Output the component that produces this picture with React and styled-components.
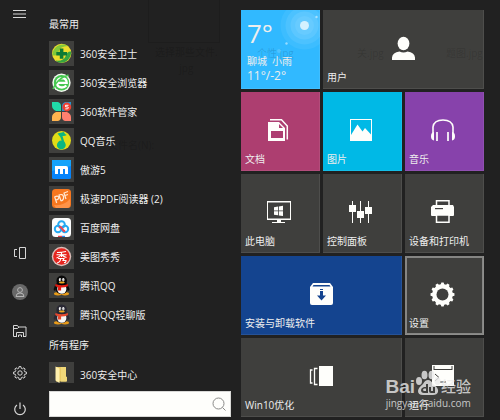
import React from 'react';
import styled, { createGlobalStyle } from 'styled-components';

const Global = createGlobalStyle`
  * { box-sizing: border-box; }
  body {
    margin: 0;
    background: #212121;
    color: #eeeeee;
    font: 10px/14px "Open Sans", "Noto Sans CJK SC", sans-serif;
  }
  button, input { font: inherit; color: inherit; }
`;

const Shell = styled.div`
  position: relative;
  display: flex;
  height: 100vh;
  overflow: hidden;
`;

const Rail = styled.nav`
  flex: none;
  display: flex;
  flex-direction: column;
  width: 40px;
`;

const RailButton = styled.button`
  display: grid;
  place-items: center;
  width: 40px;
  height: ${(p) => p.$height}px;
  margin-top: ${(p) => (p.$push ? 'auto' : '0')};
  padding: 0;
  border: 0;
  background: none;
  color: #d6d6d6;
`;

const RailGlyph = styled.svg`
  display: block;
  width: 16px;
  height: 16px;
  overflow: visible;
  fill: none;
  stroke: currentColor;
`;

const Programs = styled.section`
  flex: none;
  display: flex;
  flex-direction: column;
  width: 201px;
  padding: 17px 10px 3px 9px;
`;

const ProgramScroll = styled.div`
  flex: 1;
  min-height: 0;
  overflow: hidden;
`;

const Heading = styled.h2`
  margin: 0 0 10px;
  font-size: 10px;
  font-weight: 400;
  line-height: 14px;
`;

const AppList = styled.div`
  display: grid;
  gap: 4px;
  margin-bottom: 11px;
`;

const AppButton = styled.button`
  display: flex;
  align-items: center;
  gap: 6px;
  height: 25px;
  padding: 0;
  border: 0;
  background: none;
  text-align: left;
  white-space: nowrap;
`;

const AppIcon = styled.svg`
  flex: none;
  display: block;
  width: 25px;
  height: 25px;
  background: #3f3f3d;
`;

const Search = styled.form`
  display: flex;
  align-items: center;
  height: 26px;
  margin-top: 8px;
  padding: 0 4px 0 6px;
  background: #fefefb;
  border: 1px solid #d8d8d6;
`;

const SearchInput = styled.input`
  flex: 1;
  min-width: 0;
  border: 0;
  outline: 0;
  background: none;
  color: #222222;
`;

const SearchButton = styled.button`
  flex: none;
  padding: 0;
  border: 0;
  background: none;
  svg { display: block; width: 14px; height: 14px; }
`;

const Tiles = styled.main`
  flex: 1;
  display: grid;
  grid-template-columns: repeat(3, 1fr);
  grid-auto-rows: 79px;
  gap: 3px;
  align-content: start;
  padding: 10px 16px 3px 0;
`;

const Tile = styled.button`
  position: relative;
  display: grid;
  grid-column: span ${(p) => (p.$wide ? 2 : 1)};
  padding: 0;
  border: 0;
  overflow: hidden;
  text-align: left;
  background: ${(p) => p.$color || '#3f3f3d'};
  box-shadow: inset -1px -1px 0 rgba(255, 255, 255, 0.08)
    ${(p) => (p.$active ? ', inset 0 0 0 2px #858583' : '')};
`;

const TileIcon = styled.svg`
  grid-area: 1 / 1;
  place-self: center;
  display: block;
  width: 25px;
  height: 25px;
  margin-bottom: 2px;
  overflow: visible;
  fill: #fefefb;
`;

const TileLabel = styled.span`
  grid-area: 1 / 1;
  place-self: end start;
  padding: 0 0 5px 4px;
`;

const WeatherSky = styled.svg`
  grid-area: 1 / 1;
  justify-self: end;
  display: block;
  width: 79px;
  height: 79px;
`;

const WeatherText = styled.span`
  grid-area: 1 / 1;
  position: relative;
  display: flex;
  flex-direction: column;
  padding: 8px 0 0 6px;
`;

const Degrees = styled.span`
  font-size: 26px;
  line-height: 30px;
`;

const City = styled.span`
  padding-top: 6px;
  line-height: 14px;
`;

const Range = styled.span`
  font-size: 12px;
  line-height: 16px;
`;

const Ghost = styled.span`
  position: absolute;
  left: ${(p) => p.$x}px;
  top: ${(p) => p.$y}px;
  color: rgba(0, 0, 0, 0.14);
  line-height: 16px;
  text-align: center;
  white-space: pre-line;
  pointer-events: none;
`;

const GhostFrame = styled(Ghost)`
  width: ${(p) => p.$w}px;
  height: ${(p) => p.$h}px;
  border: 1px solid rgba(0, 0, 0, 0.1);
`;

const Watermark = styled.div`
  position: absolute;
  right: 29px;
  bottom: 11px;
  display: flex;
  flex-direction: column;
  align-items: center;
  color: rgba(235, 235, 235, 0.8);
  pointer-events: none;
`;

const WatermarkTop = styled.div`
  display: flex;
  align-items: flex-end;
  height: 30px;
  font: 700 19px/20px "Liberation Sans", "Noto Sans CJK SC", sans-serif;
  svg { display: block; width: 26px; height: 30px; }
`;

const WatermarkName = styled.span`
  font-size: 15px;
  line-height: 20px;
  font-weight: 500;
`;

const WatermarkUrl = styled.span`
  font: 10px/12px "Open Sans", sans-serif;
`;

function Penguin({ light }) {
  const dark = light ? '#292833' : '#080808';
  return (
    <>
      <ellipse cx="9" cy="20.7" rx="4" ry="1.7" fill="#e89b19" />
      <ellipse cx="16" cy="20.7" rx="4" ry="1.7" fill="#e89b19" />
      <path d="M6.5 11 4.7 16q0 3 2 1M18.5 11l2 5q0 3-2 1" fill={dark} />
      <ellipse cx="12.6" cy="14.5" rx="6.5" ry="6.7" fill={dark} />
      <ellipse cx="12.8" cy="16" rx="4.6" ry="4.8" fill="#f7f7f5" />
      <ellipse cx="12.7" cy="7.8" rx="5.3" ry="5.2" fill={dark} />
      <ellipse cx="11" cy="6.7" rx="1.2" ry="1.8" fill="#fff" />
      <ellipse cx="14.3" cy="6.7" rx="1.2" ry="1.8" fill="#fff" />
      <circle cx="11.3" cy="6.9" r=".5" fill="#111" />
      <circle cx="14" cy="6.9" r=".5" fill="#111" />
      <ellipse cx="12.8" cy="9.6" rx="3" ry="1" fill="#f0a81f" />
      <path d="M6.5 11q6.3 2.5 12.4 0v2.3q-3 1.3-6.4 1.3l-.4 0v3H8.8l.3-3.5q-2-.5-2.9-1.2Z" fill={light ? '#e5492e' : '#e31b12'} />
    </>
  );
}

const art = {
  guard: (
    <>
      <circle cx="12.7" cy="12.4" r="9.6" fill="#eedc2d" />
      <path d="M3.3 14C4 5 13 1 19 5q-8 0-9.6 6Q8.5 16 3.3 14Z" fill="#83c83a" />
      <path d="M22.2 10.5C22 20 13 25 6.5 19.5q8 1 10-4Q18 10 22.2 10.5Z" fill="#36a440" />
      <path d="M10.8 7.5h3.6V11H18v3.5h-3.6v3.3h-3.6v-3.3H7.3V11h3.5Z" fill="#0d7a35" />
    </>
  ),
  browser: (
    <>
      <circle cx="12.5" cy="12.8" r="9.2" fill="#f3f8f1" />
      <circle cx="12.5" cy="12.8" r="7.7" fill="#45c650" />
      <path d="M8 12.8h9.7q-.2-4.7-4.7-4.7-4.9.3-4.9 5 .3 4.3 4.8 4.4 2.7 0 4.4-2" fill="none" stroke="#fff" strokeWidth="2.3" />
      <path d="M4 19Q8 8.500 19.500 5" fill="none" stroke="#4acb52" strokeWidth="1.5" />
    </>
  ),
  manager: (
    <>
      <path d="M3 3h6q3 1 3 4v5H7q-4-2-4-5Z" fill="#20dba9" />
      <path d="M22 3h-6q-3 1-3 4v5h5q4-2 4-5Z" fill="#2794ce" />
      <path d="M3 22h6q3-1 3-4v-5H7q-4 2-4 5Z" fill="#ffb34e" />
      <path d="M22 22h-6q-3-1-3-4v-5h5q4 2 4 5Z" fill="#ff806f" />
      <circle cx="17.8" cy="8" r="4.4" fill="#ef3e2f" />
      <path d="M19.500 6.300h-3v1.500q3-.3 3 1.100 0 1.300-3.200 1" fill="none" stroke="#fff" />
    </>
  ),
  music: (
    <>
      <circle cx="12.5" cy="12.5" r="9.5" fill="#e1dc16" />
      <circle cx="12.3" cy="17" r="4.4" fill="#0bb681" />
      <path d="M8.500 5.500 14.800 4q1 2.600 3 3-2 1.300-4.300 1l2.900 9.500h-2L11.300 9Z" fill="#0bb681" />
    </>
  ),
  maxthon: (
    <>
      <rect x="3" y="3" width="19" height="19" rx="1.5" fill="#0784fb" />
      <path d="M3 3h19v6L3 14Z" fill="#14a3fb" />
      <path d="M6 17V9h11q2 0 2 2v6h-3v-5h-2v5h-3v-5H9v5Z" fill="#fff" />
    </>
  ),
  pdf: (
    <>
      <rect x="3" y="3" width="19" height="19" rx="3.5" fill="#f7771f" />
      <path d="M5 19q10 1 16-6v6q0 3-3 3H7Z" fill="#ff9348" />
      <g fill="none" stroke="#ffe9d5" strokeWidth="1.2">
        <path d="m7.700 17-2-6q3-2 4 .3.500 2-2.900 2.700M12 15l-2-6q3.500-1.500 4.500 1.500.600 3.500-2.500 4.500M17 13l-2-6 4-1.500M16 9.500l3-1" />
      </g>
    </>
  ),
  pan: (
    <>
      <rect x="3" y="3" width="19" height="19" rx="3.5" fill="#fcfdfd" />
      <g fill="none" strokeWidth="2">
        <circle cx="12.5" cy="9.5" r="3.3" stroke="#26aaf2" />
        <circle cx="9" cy="14" r="3.2" stroke="#26aaf2" />
        <circle cx="16" cy="14" r="3.2" stroke="#26aaf2" />
        <path d="M10 12.500q2-1 3 1t3 3" stroke="#ee4454" />
      </g>
      <path d="M9 20.800h4V22H9Z" fill="#e9404a" />
      <path d="M13 20.800h3V22h-3Z" fill="#268af1" />
    </>
  ),
  meitu: (
    <>
      <circle cx="12.5" cy="12.5" r="9.7" fill="#dcbdb8" />
      <circle cx="12.5" cy="12.5" r="8.3" fill="#e6251f" />
      <path d="M8 8.500q5 0 9-1M7.500 10.700h10M12.500 8v5M12 11q-2 2.500-4.500 3M13 11q2 2 4.500 2.500M9 14.500h6l-1 2h3q0 2.500-2 2M11.500 15q0 3-3.500 4" fill="none" stroke="#fff" strokeWidth="1.1" />
    </>
  ),
  qq: <Penguin />,
  qqlite: <Penguin light />,
  folder: (
    <>
      <path d="M7 5h10v14.500H7Z" fill="#e9ca65" />
      <path d="M12 5h5v9.500l1 .5v4.500h-6Z" fill="#f1d878" />
      <path d="m6.500 4.500 4 2V21l-4-2.500Z" fill="#fff0ad" />
    </>
  ),
};

const apps = [
  ['guard', '360安全卫士'],
  ['browser', '360安全浏览器'],
  ['manager', '360软件管家'],
  ['music', 'QQ音乐'],
  ['maxthon', '傲游5'],
  ['pdf', '极速PDF阅读器 (2)'],
  ['pan', '百度网盘'],
  ['meitu', '美图秀秀'],
  ['qq', '腾讯QQ'],
  ['qqlite', '腾讯QQ轻聊版'],
];

const gearPath = (cx, cy, outer, inner, teeth) => {
  const points = [];
  for (let i = 0; i < teeth; i += 1) {
    [[-0.32, inner], [-0.18, outer], [0.18, outer], [0.32, inner]].forEach(([o, r]) => {
      const a = ((i + o) / teeth) * Math.PI * 2 - Math.PI / 2;
      points.push(`${(cx + r * Math.cos(a)).toFixed(2)} ${(cy + r * Math.sin(a)).toFixed(2)}`);
    });
  }
  return `M${points.join('L')}Z`;
};

const tiles = [
  {
    label: '用户',
    wide: true,
    icon: (
      <>
        <ellipse cx="12.5" cy="7.5" rx="5.9" ry="6.7" />
        <path d="M1 24v-2.500q.500-5 7.500-6 4 2 8 0 7 1 7.500 6V24Z" />
      </>
    ),
  },
  {
    label: '文档',
    color: '#ad3e70',
    icon: (
      <>
        <path d="M2 1.700h11.500L19.300 8v13.500" fill="none" stroke="#fefefb" strokeWidth="1.5" />
        <path fillRule="evenodd" d="M0 4h11l6 6v13H0ZM3 13v7h12v-7ZM11 6v4h4Z" />
      </>
    ),
  },
  {
    label: '图片',
    color: '#00b9e6',
    icon: <path fillRule="evenodd" d="M0 1h22v22H0ZM1 2v15L7.500 6.500l5 7 2.500-3.500 6 6.500V2Z" />,
  },
  {
    label: '音乐',
    color: '#8742ab',
    icon: (
      <>
        <path d="M1 15V9Q2 2 11 2t10 7v6" fill="none" stroke="#fefefb" strokeWidth="1.6" />
        <path d="M2 14v8.500q-3-.500-3-4.300T2 14ZM20 14v8.500q3-.500 3-4.300T20 14Z" />
        <path d="M4 14h2v9H4ZM15 14h2v9h-2Z" opacity=".85" />
      </>
    ),
  },
  {
    label: '此电脑',
    icon: (
      <>
        <path fillRule="evenodd" d="M-1 1h24v19H13v2h4v1H4v-1h5v-2H-1ZM0 2.500v16h22v-16Z" />
        <path d="m6 7.200 4-.700v4H6Zm4.800-.800L15 5.700v4.800h-4.200ZM6 11.300h4v4l-4-.600Zm4.800 0H15v4.800l-4.200-.700Z" />
      </>
    ),
  },
  {
    label: '控制面板',
    icon: <path d="M2 1h1v4h3v7H3v11H2V12h-3V5h3ZM10 1h1v10h3v7h-3v5h-1v-5H7v-7h3ZM18 1h1v6h3v7h-3v9h-1v-9h-3V7h3Z" />,
  },
  {
    label: '设备和打印机',
    icon: (
      <>
        <path d="M1 5h20l1 2v8q0 1-1 1H0q-1 0-1-1V7Z" />
        <path d="M4.500 5V.700h12.500V5" fill="none" stroke="#fefefb" strokeWidth="1.5" />
        <path d="M4.500 15h12.500v7.300H4.500Z" fill="#3f3f3d" stroke="#fefefb" strokeWidth="1.5" />
        <path d="M3 8h8v1.200H3Z" fill="#3f3f3d" />
      </>
    ),
  },
  {
    label: '安装与卸载软件',
    wide: true,
    color: '#14448f',
    icon: (
      <>
        <path d="M4 1h17l3 4v16q0 2-2 2H3q-2 0-2-2V5Z" />
        <path d="M4.500 3h16l1 1.500H3.500ZM11 7h3v1h-3ZM11 9h3v4.500h3l-4.500 5-4.500-5h3Z" fill="#14448f" />
      </>
    ),
  },
  {
    label: '设置',
    active: true,
    icon: (
      <>
        <path d={gearPath(10.5, 12.5, 12, 10.3, 12)} />
        <circle cx="10.5" cy="12.5" r="6" fill="#3f3f3d" />
      </>
    ),
  },
  {
    label: 'Win10优化',
    wide: true,
    icon: (
      <>
        <path d="M10 2h14v20H10Z" />
        <path d="M8.500 4.500h-3v16h3M3.500 6h-2v13h2" fill="none" stroke="#fefefb" strokeWidth="1.3" />
      </>
    ),
  },
  {
    label: '运行',
    icon: (
      <>
        <path d="M0 1h22v21H0Z" />
        <path d="M1.500 2h1v3h17V2h1v4h-19Z" fill="#3f3f3d" />
        <path d="m3 10 4 3.500L3 17M8 18h6" fill="none" stroke="#3f3f3d" />
      </>
    ),
  },
];

function Program({ art: name, label }) {
  return (
    <AppButton type="button">
      <AppIcon viewBox="0 0 25 25" aria-hidden="true">{art[name]}</AppIcon>
      {label}
    </AppButton>
  );
}

export default function App() {
  return (
    <>
      <Global />
      <Shell>
        <Rail>
          <RailButton type="button" aria-label="菜单" $height={28}>
            <RailGlyph viewBox="0 0 16 16"><path d="M1 4.500h13M1 8h13M1 11.500h13" /></RailGlyph>
          </RailButton>
          <RailButton type="button" aria-label="布局" $height={34} $push>
            <RailGlyph viewBox="0 0 16 16">
              <path d="M7.500 2.500h6v11h-6ZM5 4.500H2.500v7H5" />
            </RailGlyph>
          </RailButton>
          <RailButton type="button" aria-label="账户" $height={44}>
            <RailGlyph viewBox="0 0 16 16">
              <circle cx="8" cy="8" r="8" fill="#686868" stroke="none" />
              <g stroke="#b5b5b5">
                <circle cx="8" cy="6" r="2.4" />
                <path d="M4 12.500q0-3.500 4-3.500t4 3.500Z" />
              </g>
            </RailGlyph>
          </RailButton>
          <RailButton type="button" aria-label="文件资源管理器" $height={34}>
            <RailGlyph viewBox="0 0 16 16">
              <path d="M4.500 13.500h-3v-11h4l1 1.500h7.500v9.500h-2.500M1.500 5.500h4L7 4M4.500 14V9.500h7V14M6.500 14v-2h3v2" />
            </RailGlyph>
          </RailButton>
          <RailButton type="button" aria-label="设置" $height={50}>
            <RailGlyph viewBox="0 0 16 16">
              <path d={gearPath(8, 8, 6.5, 4.9, 8)} />
              <circle cx="8" cy="8" r="2.2" />
            </RailGlyph>
          </RailButton>
          <RailButton type="button" aria-label="电源" $height={22}>
            <RailGlyph viewBox="0 0 16 16">
              <path d="M8 1.500V8M5 4a5.300 5.300 0 1 0 6 0" strokeWidth="1.2" />
            </RailGlyph>
          </RailButton>
        </Rail>

        <Programs>
          <ProgramScroll>
            <Heading>最常用</Heading>
            <AppList>
              {apps.map(([name, label]) => <Program key={name} art={name} label={label} />)}
            </AppList>
            <Heading>所有程序</Heading>
            <AppList>
              <Program art="folder" label="360安全中心" />
            </AppList>
          </ProgramScroll>
          <Search onSubmit={(e) => e.preventDefault()}>
            <SearchInput type="text" aria-label="搜索程序" />
            <SearchButton type="submit" aria-label="搜索">
              <svg viewBox="0 0 14 14" fill="none" stroke="#8a8a88">
                <circle cx="6.5" cy="6.5" r="5.5" />
                <path d="m10.500 10.500 3 3" />
              </svg>
            </SearchButton>
          </Search>
        </Programs>

        <Tiles>
          <Tile type="button" $color="#31b9ff">
            <WeatherSky viewBox="0 0 79 79" aria-hidden="true" fill="#fff">
              <circle cx="63.5" cy="15.5" r="24" opacity=".06" />
              <circle cx="63.5" cy="15.5" r="19" opacity=".08" />
              <circle cx="63.5" cy="15.5" r="14" opacity=".09" />
              <circle cx="63.5" cy="15.5" r="9.5" opacity=".07" />
              <circle cx="63.5" cy="15.5" r="4.5" opacity=".72" />
              <circle cx="75.5" cy="7" r="1.2" opacity=".5" />
              <circle cx="45.5" cy="33.5" r="1.2" opacity=".5" />
              <circle cx="38" cy="41" r="2" opacity=".15" />
            </WeatherSky>
            <WeatherText>
              <Degrees>7°</Degrees>
              <City>聊城&ensp;小雨</City>
              <Range>11°/-2°</Range>
            </WeatherText>
          </Tile>
          {tiles.map((t) => (
            <Tile key={t.label} type="button" $wide={t.wide} $color={t.color} $active={t.active}>
              <TileIcon viewBox="0 0 25 25" aria-hidden="true">{t.icon}</TileIcon>
              <TileLabel>{t.label}</TileLabel>
            </Tile>
          ))}
        </Tiles>

        <GhostFrame $x={148} $y={-2} $w={72} $h={45} />
        <Ghost $x={155} $y={44}>{'选择那些文件.\njpg'}</Ghost>
        <Ghost $x={108} $y={137}>文件名(N):</Ghost>
        <Ghost $x={257} $y={45}>个性.jpg</Ghost>
        <Ghost $x={357} $y={45}>关.jpg</Ghost>
        <Ghost $x={446} $y={45}>题图.jpg</Ghost>

        <Watermark>
          <WatermarkTop>
            <span>Bai</span>
            <svg viewBox="0 0 26 30" fill="currentColor" aria-hidden="true">
              <ellipse cx="4" cy="14" rx="3" ry="4" />
              <ellipse cx="9.5" cy="8" rx="3" ry="4.3" />
              <ellipse cx="16.5" cy="8" rx="3" ry="4.3" />
              <ellipse cx="22.5" cy="14" rx="3" ry="4" />
              <path fillRule="evenodd" d="M13 13q3 0 5 4 6 4 5 8-1 3-5 3H8q-5 0-5-4 0-3 5-7 2-4 5-4ZM11 17v3H9q-3 1-3 3 0 3 3 3h4v-9Zm0 4.500V24H9q-2-1 0-2.500ZM14 20v4q0 2 2 2h4v-6h-2v4h-2v-4Z" />
            </svg>
            <WatermarkName>经验</WatermarkName>
          </WatermarkTop>
          <WatermarkUrl>jingyan.baidu.com</WatermarkUrl>
        </Watermark>
      </Shell>
    </>
  );
}
